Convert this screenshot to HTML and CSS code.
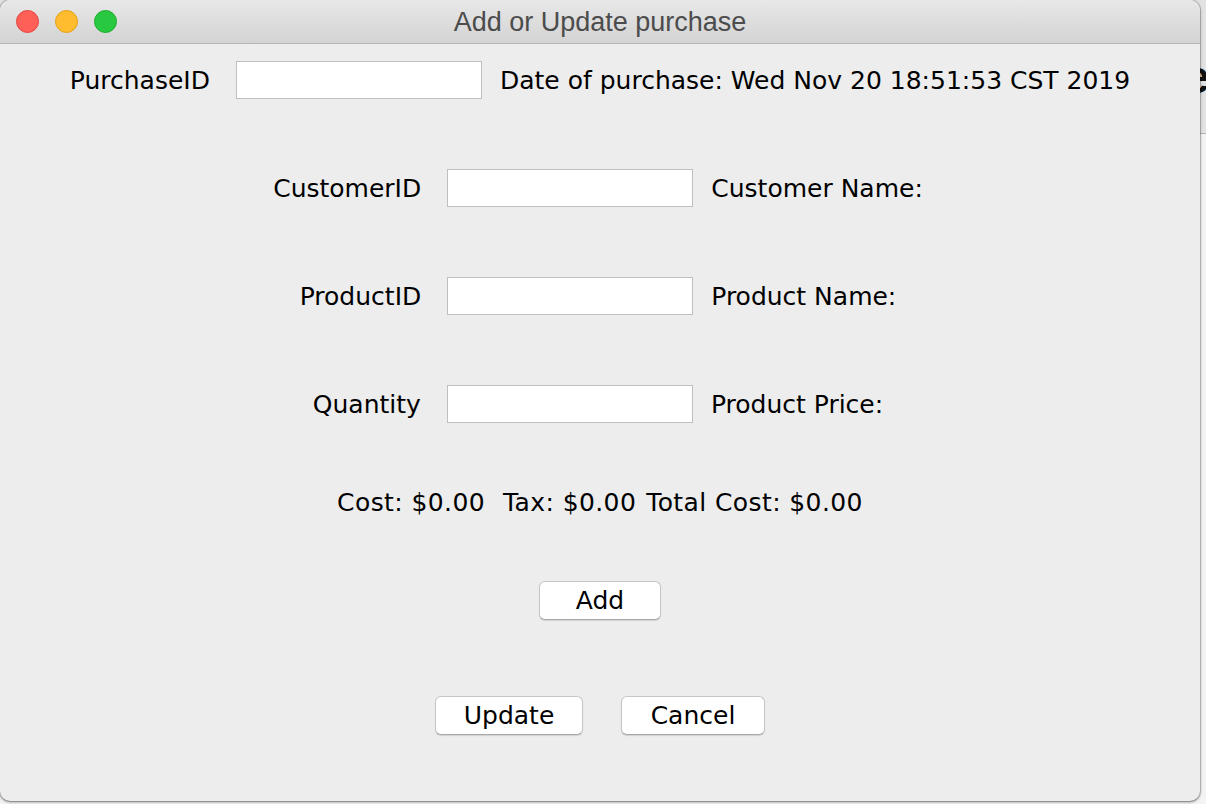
FILE: index.html
```html
<!DOCTYPE html>
<html>
<head>
<meta charset="utf-8">
<link rel="stylesheet" href="styles.css">
</head>
<body>
<div class="backdrop">
  <div class="bg-glyph">e</div>
  <div class="bg-line"></div>
</div>
<div class="window">
  <div class="titlebar">
    <div class="lights">
      <span class="light red"></span>
      <span class="light yellow"></span>
      <span class="light green"></span>
    </div>
    <div class="title">Add or Update purchase</div>
  </div>
  <div class="content">
    <div class="row row1">
      <span class="label">PurchaseID</span>
      <span class="input"></span>
      <span class="text">Date of purchase: Wed Nov 20 18:51:53 CST 2019</span>
    </div>
    <div class="row row2">
      <span class="label">CustomerID</span>
      <span class="input"></span>
      <span class="text tail">Customer Name:</span>
    </div>
    <div class="row row2">
      <span class="label">ProductID</span>
      <span class="input"></span>
      <span class="text tail">Product Name:</span>
    </div>
    <div class="row row2">
      <span class="label">Quantity</span>
      <span class="input"></span>
      <span class="text tail">Product Price:</span>
    </div>
    <div class="row totals">
      <span class="t1">Cost: $0.00</span>
      <span class="t2">Tax: $0.00</span>
      <span class="t3">Total Cost: $0.00</span>
    </div>
    <div class="row addrow">
      <button class="btn add">Add</button>
    </div>
    <div class="row actions">
      <button class="btn update">Update</button>
      <button class="btn cancel">Cancel</button>
    </div>
  </div>
</div>
</body>
</html>
```
FILE: styles.css
```css
html, body {
  margin: 0;
  padding: 0;
}
body {
  width: 1206px;
  height: 804px;
  background: #a9a9a9;
  position: relative;
  overflow: hidden;
  font-family: "DejaVu Sans", sans-serif;
}
.backdrop {
  position: absolute;
  left: 0;
  top: 0;
  width: 1206px;
  height: 804px;
  background: linear-gradient(#e2e2e2 0, #e2e2e2 133px, #f3f3f3 134px, #f3f3f3 100%);
}
.bg-glyph {
  position: absolute;
  left: 1184px;
  top: 50px;
  font-size: 46px;
  font-family: "Liberation Sans", sans-serif;
  font-weight: bold;
  color: #111;
}
.bg-line {
  position: absolute;
  left: 1180px;
  top: 133px;
  width: 30px;
  height: 1px;
  background: #b4b4b4;
}
.window {
  position: absolute;
  left: 0;
  top: 0;
  width: 1200px;
  height: 801px;
  border-radius: 10px;
  background: #ededed;
  box-shadow: 0 1px 3px rgba(0,0,0,0.45), 0 0 0 1px rgba(0,0,0,0.15);
  overflow: hidden;
}
.titlebar {
  height: 43px;
  border-bottom: 1px solid #b6b6b6;
  background: linear-gradient(#e8e8e8, #d3d3d3);
  display: flex;
  align-items: center;
  justify-content: center;
  position: relative;
}
.lights {
  position: absolute;
  left: 16px;
  top: 10px;
  display: flex;
  gap: 16px;
}
.light {
  width: 23px;
  height: 23px;
  border-radius: 50%;
  box-sizing: border-box;
}
.red { background: #fe5f57; border: 1px solid #e2463f; }
.yellow { background: #febc2e; border: 1px solid #e1a116; }
.green { background: #28c840; border: 1px solid #1dad2b; }
.title {
  font-family: "Liberation Sans", sans-serif;
  font-size: 27px;
  color: #4c4c4c;
  margin-top: 2px;
}
.content {
  display: flex;
  flex-direction: column;
  align-items: center;
  color: #000;
  font-size: 25px;
}
.row {
  display: flex;
  align-items: center;
  justify-content: center;
  width: 100%;
  height: 38px;
}
.row1 { margin-top: 17px; }
.row2 { margin-top: 70px; }
.input {
  width: 246px;
  height: 38px;
  box-sizing: border-box;
  background: #fff;
  border: 1px solid #bfbfbf;
  margin-left: 26px;
  margin-right: 18px;
}
.tail { margin-right: 4px; }
.totals { margin-top: 60px; letter-spacing: 0.4px; }
.t2 { margin-left: 18px; }
.t3 { margin-left: 10px; }
.addrow { margin-top: 60px; height: 39px; }
.actions { margin-top: 76px; height: 39px; gap: 38px; }
.btn {
  font-family: "DejaVu Sans", sans-serif;
  font-size: 25px;
  color: #000;
  background: #fff;
  border: 1px solid #c6c6c6;
  border-bottom-color: #a9a9a9;
  border-radius: 6px;
  height: 39px;
  padding: 0;
  box-shadow: 0 1px 1px rgba(0,0,0,0.12);
}
.add { width: 122px; }
.update { width: 148px; }
.cancel { width: 144px; }
```
